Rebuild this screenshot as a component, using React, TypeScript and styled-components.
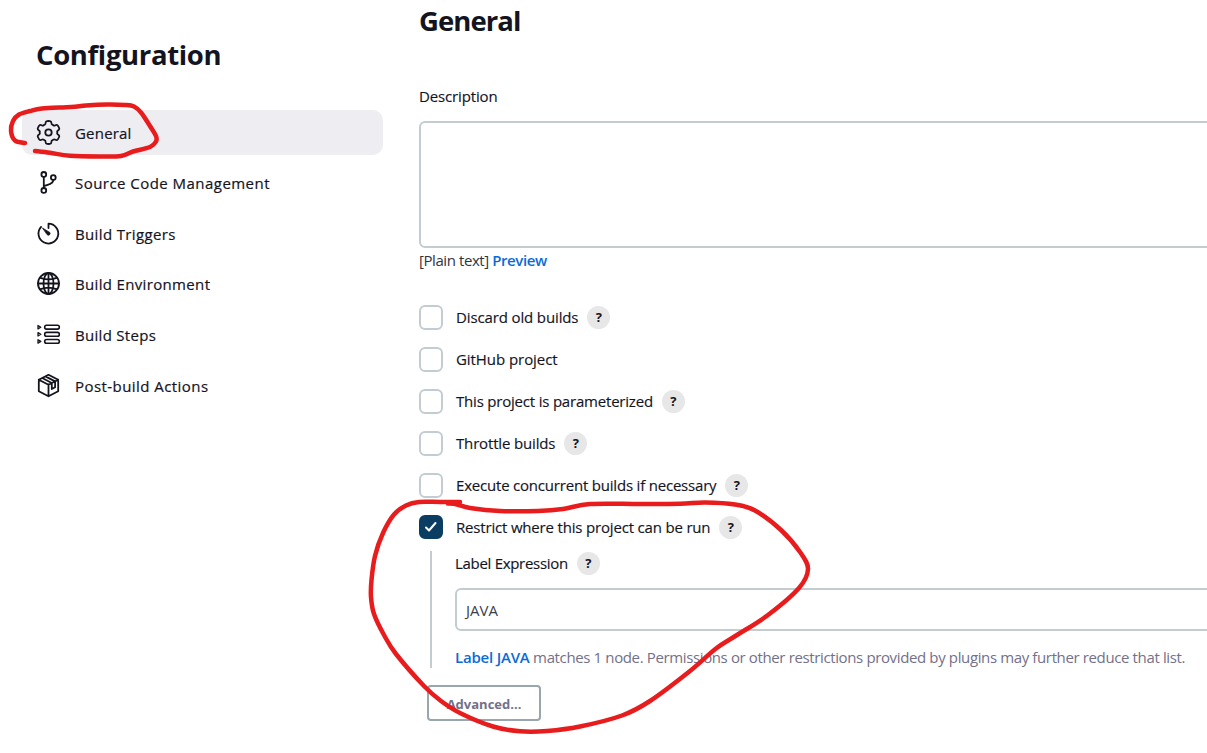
import React from "react";
import styled, { createGlobalStyle } from "styled-components";

const GlobalStyle = createGlobalStyle`
  *, *::before, *::after { box-sizing: border-box; }
  body {
    margin: 0;
    background: #fff;
    color: #14141f;
    font-family: "Open Sans", "Noto Sans", sans-serif;
    font-size: 15px;
    overflow: hidden;
  }
`;

const Page = styled.div`
  position: relative;
  display: flex;
  width: 1207px;
  height: 753px;
  overflow: hidden;
`;

const Sidebar = styled.aside`
  flex: none;
  width: 419px;
  padding: 35px 36px 0 22px;
`;

const SidebarTitle = styled.h1`
  margin: 0 0 35px;
  padding-left: 14px;
  font-size: 27.5px;
  line-height: 39px;
  height: 40px;
  font-weight: 700;
  letter-spacing: -0.35px;
`;

const Tasks = styled.nav`
  display: flex;
  flex-direction: column;
  gap: 5.65px;
`;

const Task = styled.a<{ $active?: boolean }>`
  display: flex;
  align-items: center;
  height: 45px;
  padding-left: 14px;
  border-radius: 10px;
  background: ${(p) => (p.$active ? "#eeedf2" : "transparent")};
  font-size: 15px;
  font-weight: 500;
  -webkit-text-stroke: 0.2px currentColor;

  svg {
    flex: none;
    width: 25px;
    height: 25px;
    margin: -1px 14px 0 0;
  }
`;

const TaskText = styled.span<{ $spacing: number }>`
  letter-spacing: ${(p) => p.$spacing}px;
`;

const Main = styled.main`
  flex: none;
  width: 900px;
`;

const SectionTitle = styled.h2`
  margin: 2px 0 46px;
  font-size: 27.5px;
  line-height: 38px;
  font-weight: 700;
  letter-spacing: -0.95px;
`;

const FieldLabel = styled.div`
  height: 21px;
  margin-bottom: 14px;
  font-size: 15px;
  line-height: 21px;
  font-weight: 500;
  letter-spacing: -0.15px;
  -webkit-text-stroke: 0.15px currentColor;
`;

const TextArea = styled.div`
  height: 127px;
  border: 2px solid #c3ccd1;
  border-radius: 6px;
`;

const Hint = styled.div`
  margin-top: 1px;
  height: 22px;
  line-height: 22px;
  font-size: 15px;
  letter-spacing: -0.42px;
  color: #33333f;
`;

const Link = styled.a`
  color: #0b6bd6;
  font-weight: 600;
`;

const Options = styled.div`
  padding-top: 25px;
`;

const Option = styled.div`
  display: flex;
  align-items: center;
  height: 42px;
  font-weight: 500;
`;

const Box = styled.span<{ $checked?: boolean }>`
  display: flex;
  align-items: center;
  justify-content: center;
  width: 24px;
  height: ${(p) => (p.$checked ? 24 : 25)}px;
  margin-right: 13px;
  border: 2px solid ${(p) => (p.$checked ? "#0b3d62" : "#c3ccd1")};
  border-radius: 6px;
  background: ${(p) => (p.$checked ? "#0b3d62" : "#fff")};
`;

const OptionText = styled.span<{ $spacing: number }>`
  letter-spacing: ${(p) => p.$spacing}px;
  -webkit-text-stroke: 0.15px currentColor;
`;

const Help = styled.span`
  display: flex;
  align-items: center;
  justify-content: center;
  width: 23px;
  height: 23px;
  margin-left: 9px;
  border-radius: 50%;
  background: #e7e7e8;
  font-size: 13px;
  font-weight: 700;
`;

const Nested = styled.div`
  margin: 3px 0 0 11px;
  height: 117px;
  padding-left: 23px;
  border-left: 2px solid #c3ccd1;
`;

const NestedLabel = styled.div`
  display: flex;
  align-items: center;
  height: 24px;
  font-weight: 500;
`;

const Input = styled.div`
  display: flex;
  align-items: center;
  height: 43px;
  margin-top: 13px;
  padding-left: 9px;
  border: 2px solid #c3ccd1;
  border-radius: 6px;
  font-size: 15px;
  letter-spacing: 0;
  color: #3d3d48;
`;

const Message = styled.div`
  margin-top: 15px;
  line-height: 22px;
  white-space: nowrap;
  letter-spacing: -0.37px;
  color: #737089;

  ${Link} {
    letter-spacing: -0.2px;
  }
`;

const AdvancedButton = styled.button`
  display: block;
  width: 114px;
  height: 36px;
  margin: 17px 0 0 8px;
  padding: 2px 0 0;
  border: 2px solid #98a6ad;
  border-radius: 4px;
  background: #fff;
  color: #737089;
  font: 700 13px "Open Sans", "Noto Sans", sans-serif;
`;

const Markup = styled.svg`
  position: absolute;
  inset: 0;
  pointer-events: none;
`;

const Glyph = ({ children }: { children: React.ReactNode }) => (
  <svg viewBox="0 0 25 25" fill="none" stroke="#14141f" strokeWidth="1.8" strokeLinecap="round" strokeLinejoin="round">
    {children}
  </svg>
);

// Six-toothed outline: control points in polar form, rounded through their midpoints.
const gearOutline = () => {
  const pts = Array.from({ length: 6 }).flatMap((_, k) =>
    [[11.6, -14], [11.6, 0], [11.6, 14], [8.6, 20], [8.9, 30], [8.6, 40]].map(([r, a]) => {
      const t = ((a + k * 60 - 90) * Math.PI) / 180;
      return [12.5 + r * Math.cos(t), 12.5 + r * Math.sin(t)];
    }),
  );
  const mid = (i: number) => {
    const a = pts[i % pts.length];
    const b = pts[(i + 1) % pts.length];
    return `${((a[0] + b[0]) / 2).toFixed(2)} ${((a[1] + b[1]) / 2).toFixed(2)}`;
  };
  return pts.reduce((d, _, i) => {
    const c = pts[(i + 1) % pts.length];
    return `${d}Q${c[0].toFixed(2)} ${c[1].toFixed(2)} ${mid(i + 1)}`;
  }, `M${mid(0)}`) + "z";
};

const Gear = () => (
  <Glyph>
    <path d={gearOutline()} />
    <circle cx="12.500" cy="12.500" r="3.200" />
  </Glyph>
);

const Branch = () => (
  <Glyph>
    <circle cx="7.800" cy="4.400" r="2.400" />
    <circle cx="17.300" cy="7.600" r="2.400" />
    <circle cx="7.800" cy="20.400" r="2.400" />
    <path d="M7.800 7v10.800M17.300 10.200c-.3 4.400-6 4-9.500 6" />
  </Glyph>
);

const Timer = () => (
  <Glyph>
    <path d="M12.500 7V2.700a9.900 9.900 0 1 1-7.400 3.200" />
    <path d="M6.800 7.200l7 4.300a1.700 1.700 0 0 1-2.300 2.400z" fill="#14141f" strokeWidth="0.800" />
  </Glyph>
);

const Globe = () => (
  <Glyph>
    <circle cx="12.500" cy="12.500" r="10.500" />
    <ellipse cx="12.500" cy="12.500" rx="5" ry="10.500" />
    <path d="M12.500 2v21M2 12.500h21M4.500 6.800q8 3.300 16 0M4.500 18.200q8-3.300 16 0" />
  </Glyph>
);

const Steps = () => (
  <Glyph>
    {[5.2, 12.3, 19.4].map((y) => (
      <React.Fragment key={y}>
        <rect x="8.700" y={y - 1.9} width="14.600" height="3.800" rx="1.800" strokeWidth="1.600" />
        <path d={`M2 ${y - 1.7}l2.800 1.700L2 ${y + 1.7}z`} strokeWidth="1.300" />
      </React.Fragment>
    ))}
  </Glyph>
);

const Package = () => (
  <Glyph>
    <path d="M12.500 1.800l9.700 4.900v11.500l-9.700 5.100-9.700-5.100V6.700zM2.800 6.700l9.700 5 9.700-5M12.500 11.700v11.600M6.200 5l9.600 5v6l3.300-1.800V8.400L9.400 3.400" />
  </Glyph>
);

const tasks = [
  { label: "General", icon: <Gear />, active: true, spacing: 0.2 },
  { label: "Source Code Management", icon: <Branch />, spacing: 0.46 },
  { label: "Build Triggers", icon: <Timer />, spacing: 0.36 },
  { label: "Build Environment", icon: <Globe />, spacing: 0.34 },
  { label: "Build Steps", icon: <Steps />, spacing: 0.3 },
  { label: "Post-build Actions", icon: <Package />, spacing: 0.44 },
];

const options = [
  { label: "Discard old builds", help: true, spacing: -0.13 },
  { label: "GitHub project", spacing: -0.06 },
  { label: "This project is parameterized", help: true, spacing: -0.2 },
  { label: "Throttle builds", help: true, spacing: -0.16 },
  { label: "Execute concurrent builds if necessary", help: true, spacing: -0.2 },
  { label: "Restrict where this project can be run", help: true, checked: true, spacing: -0.18 },
];

type Point = [number, number];

const taskStroke: Point[] = [
  [25, 143], [15, 140.5], [11, 131], [13, 121], [19, 114.500], [30, 111], [42, 108.500], [71, 107], [86, 105.500],
  [107, 104.600], [125, 105], [134, 106.500], [141, 112.500], [150, 126], [156, 136], [156, 141.500], [150, 147],
  [133, 151.500], [121, 156], [100, 156.500], [70, 155.800], [50, 152.800], [35, 151],
];

const optionStroke: Point[] = [
  [460, 502], [440, 502], [419, 502], [406, 505.500], [394, 514.500], [383, 533], [375, 556], [371.500, 580], [371, 597],
  [374, 614], [384, 635], [396, 654], [424, 686], [441, 701], [461, 713.500], [493, 726.500], [520, 731.300],
  [547, 731], [580, 726.500], [622, 715.500], [650, 701], [690, 671], [716, 648.500], [737, 635], [768, 615],
  [799, 588], [808, 569], [800, 552], [781, 530], [755, 510.500], [735, 504.500], [705, 502.500], [680, 503.800],
  [640, 504], [590, 504], [563, 509], [538, 511], [500, 511], [470, 508], [457, 504.500], [448, 503.500],
];

// Catmull-Rom points converted to cubic Bézier segments.
const smooth = (pts: Point[]) =>
  pts.slice(1).reduce((d, p, i) => {
    const a = pts[Math.max(0, i - 1)];
    const b = pts[i];
    const n = pts[Math.min(pts.length - 1, i + 2)];
    return `${d}C${b[0] + (p[0] - a[0]) / 6} ${b[1] + (p[1] - a[1]) / 6} ${p[0] - (n[0] - b[0]) / 6} ${p[1] - (n[1] - b[1]) / 6} ${p[0]} ${p[1]}`;
  }, `M${pts[0][0]} ${pts[0][1]}`);

export default function App() {
  return (
    <Page>
      <GlobalStyle />
      <Sidebar>
        <SidebarTitle>Configuration</SidebarTitle>
        <Tasks>
          {tasks.map((t) => (
            <Task key={t.label} $active={t.active}>
              {t.icon}
              <TaskText $spacing={t.spacing}>{t.label}</TaskText>
            </Task>
          ))}
        </Tasks>
      </Sidebar>
      <Main>
        <SectionTitle>General</SectionTitle>
        <FieldLabel>Description</FieldLabel>
        <TextArea />
        <Hint>
          [Plain text] <Link>Preview</Link>
        </Hint>
        <Options>
          {options.map((o) => (
            <Option key={o.label}>
              <Box $checked={o.checked}>
                {o.checked && (
                  <svg width="14" height="12" viewBox="0 0 14 12" fill="none" stroke="#fff" strokeWidth="2" strokeLinecap="round" strokeLinejoin="round">
                    <path d="M2 6.500l3 3L11.500 2" />
                  </svg>
                )}
              </Box>
              <OptionText $spacing={o.spacing}>{o.label}</OptionText>
              {o.help && <Help>?</Help>}
            </Option>
          ))}
        </Options>
        <Nested>
          <NestedLabel>
            <OptionText $spacing={-0.3}>Label Expression</OptionText>
            <Help>?</Help>
          </NestedLabel>
          <Input>JAVA</Input>
          <Message>
            <Link>Label JAVA</Link> matches 1 node. Permissions or other restrictions provided by plugins may further
            reduce that list.
          </Message>
        </Nested>
        <AdvancedButton>Advanced...</AdvancedButton>
      </Main>
      <Markup width="1207" height="753" fill="none" stroke="#e81c1c" strokeWidth="4.500" strokeLinecap="round" strokeLinejoin="round">
        <path d={smooth(taskStroke)} />
        <path d={smooth(optionStroke)} />
      </Markup>
    </Page>
  );
}
